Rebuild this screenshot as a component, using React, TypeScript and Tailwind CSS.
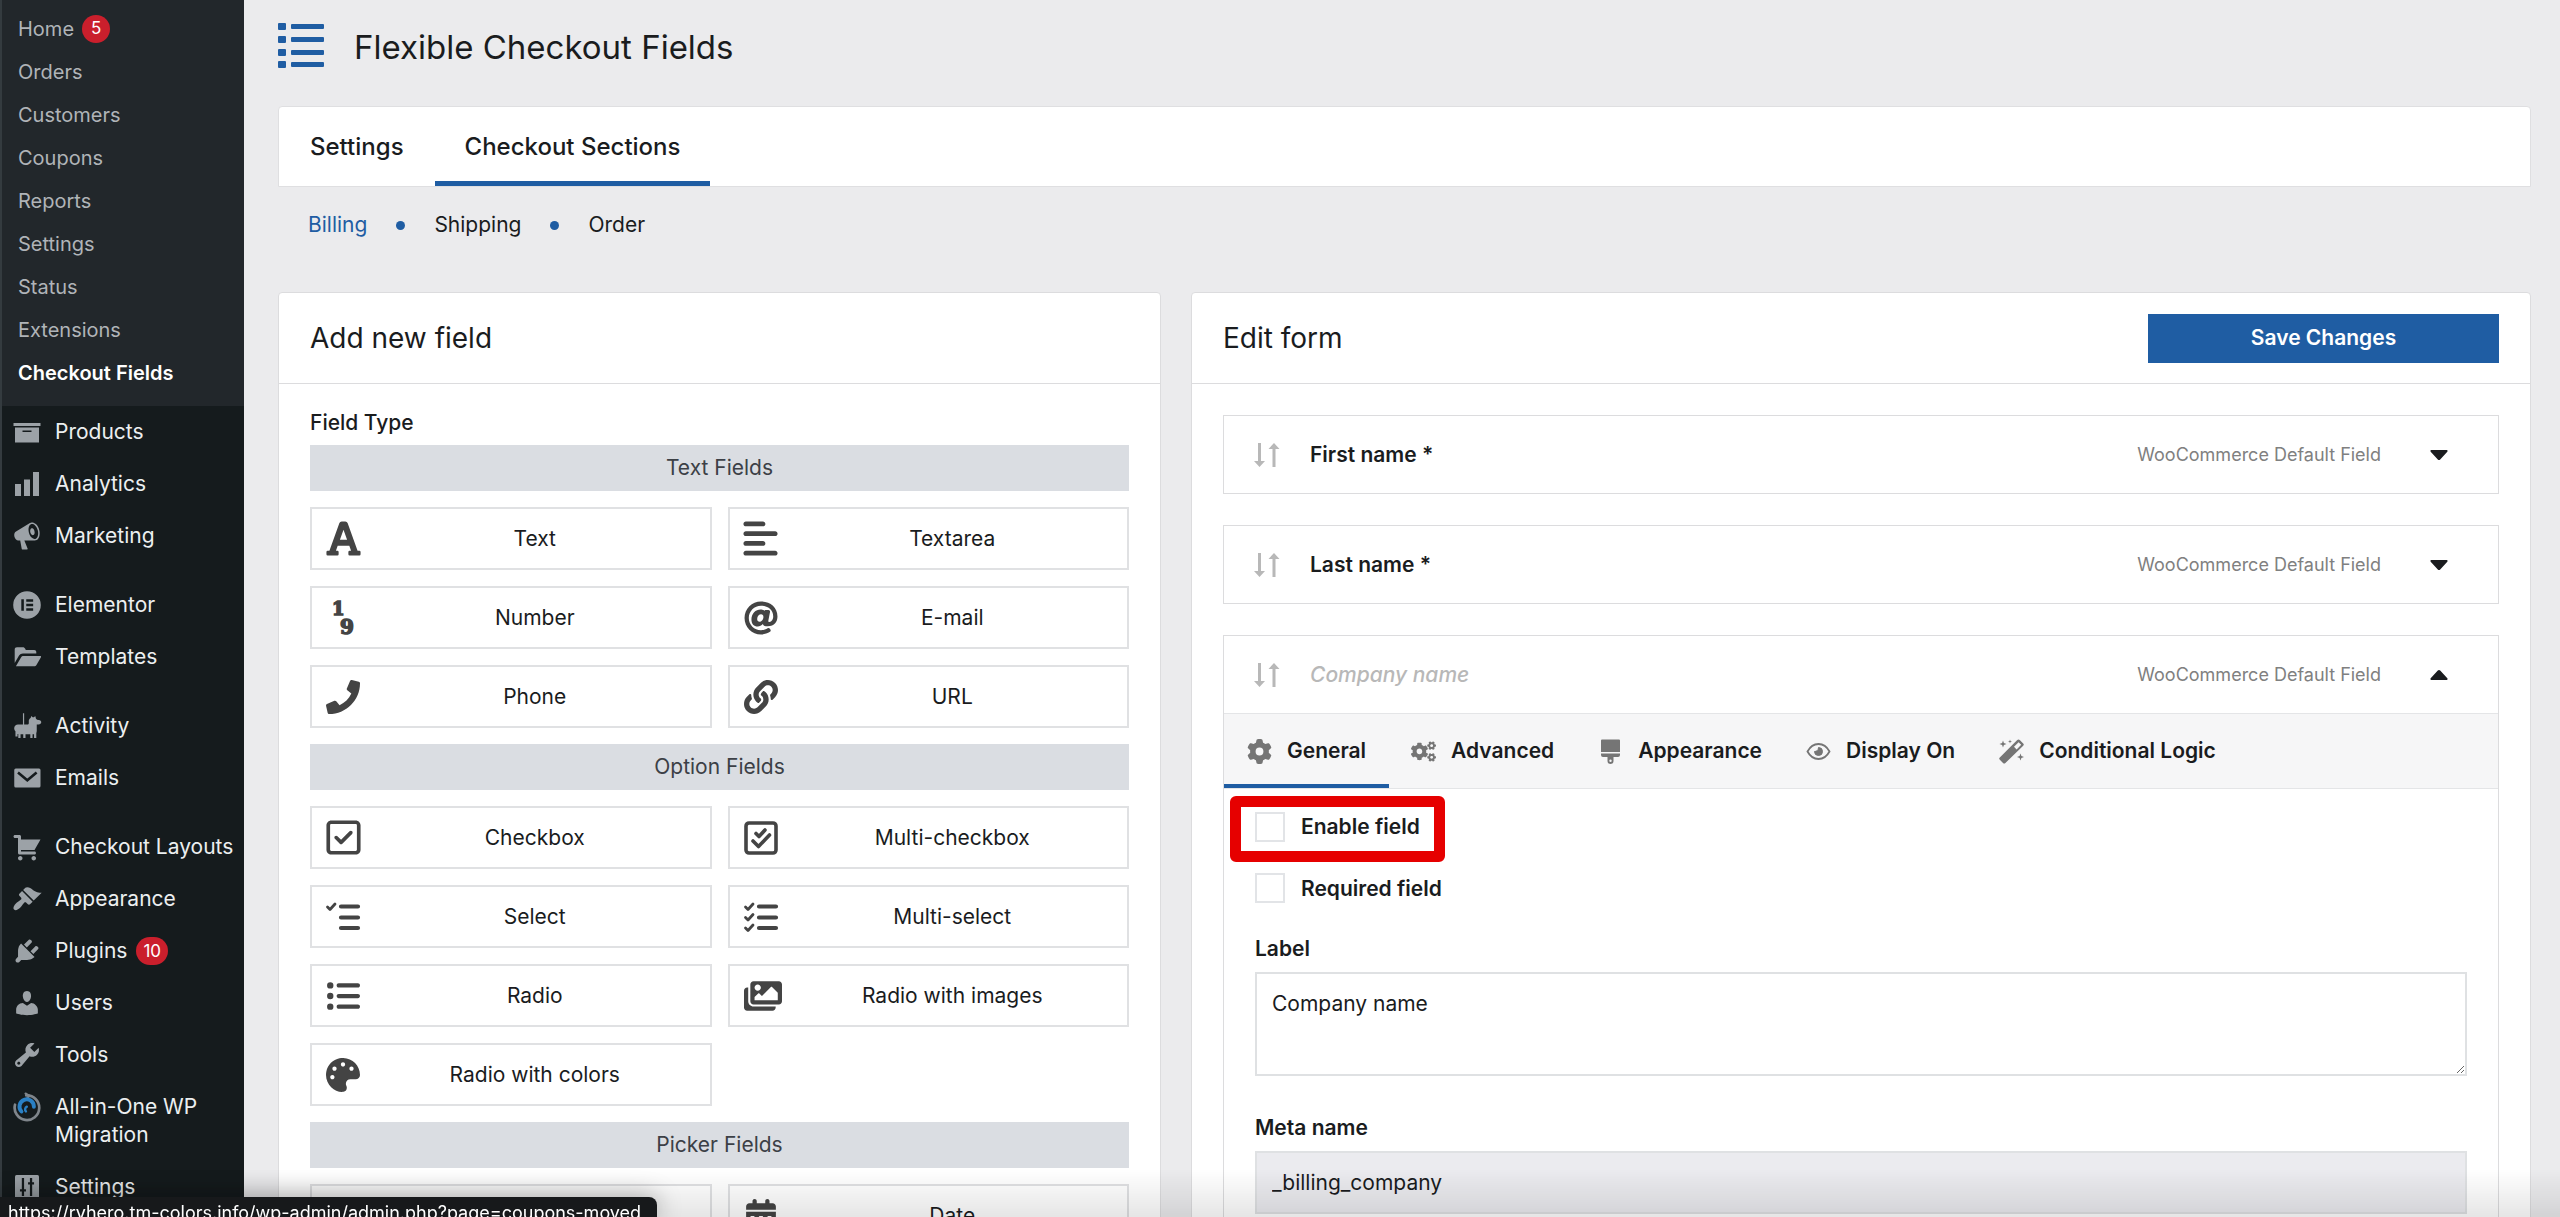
import type { ReactNode } from 'react'
import { FaAt, FaCogs, FaFont, FaImages, FaLink, FaPalette, FaPhone } from 'react-icons/fa'
import { FaAlignLeft, FaCalendarDays, FaGear, FaListUl, FaRegSquareCheck } from 'react-icons/fa6'

const submenu = ['Home', 'Orders', 'Customers', 'Coupons', 'Reports', 'Settings', 'Status', 'Extensions', 'Checkout Fields']

function Dash({ children }: { children: ReactNode }) {
  return (
    <svg viewBox="0 0 20 20" className="-my-px mr-1 size-[30px] shrink-0 text-[#9ca2a7]" fill="currentColor" aria-hidden="true">
      {children}
    </svg>
  )
}

const icons = {
  products: <path d="M19 4v2H1V4h18zM2 7h16v10H2V7zm11 3V9H7v1h6z" />,
  analytics: <path d="M18 18V2h-4v16h4zm-6 0V7H8v11h4zm-6 0v-8H2v8h4z" />,
  marketing: (
    <path d="M18.15 5.94c.46 1.62.38 3.22-.02 4.48-.42 1.28-1.26 2.18-2.3 2.48-.16.06-.26.06-.4.06-.06.02-.12.02-.18.02-.06.02-.14.02-.22.02h-6.8l2.22 5.5c.02.14-.06.26-.14.34-.08.1-.24.16-.34.16H6.95c-.1 0-.26-.06-.34-.16-.08-.08-.16-.2-.14-.34l-1-5.5H4.25l-.02-.02c-.5.06-1.08-.18-1.54-.62s-.88-1.08-1.06-1.88c-.24-.8-.2-1.56-.02-2.2.18-.62.58-1.08 1.06-1.3l.02-.02 9-5.4c.1-.06.18-.1.24-.16.06-.04.14-.08.24-.12.16-.08.28-.12.5-.18 1.04-.3 2.24.1 3.22.98s1.84 2.24 2.26 3.86zm-2.58 5.98h-.02c.4-.1.74-.34 1.04-.7.58-.7.86-1.76.86-3.04 0-.64-.1-1.3-.28-1.98-.34-1.36-1.02-2.5-1.78-3.24s-1.68-1.1-2.46-.88c-.82.22-1.4.96-1.7 2-.32 1.04-.28 2.36.06 3.72.38 1.36 1 2.5 1.8 3.24.78.74 1.62 1.1 2.48.88zm-2.54-7.08c.22-.04.42-.02.62.04.38.16.76.48 1.02 1s.42 1.2.42 1.78c0 .3-.04.56-.12.8-.18.48-.44.84-.86.94-.34.1-.8-.06-1.14-.4s-.64-.86-.78-1.5c-.18-.62-.12-1.24.02-1.72s.48-.84.82-.94z" />
  ),
  elementor: (
    <path fillRule="evenodd" d="M10 .8a9.2 9.2 0 1 0 0 18.4A9.2 9.2 0 0 0 10 .8zM6.2 6.2h1.7v7.6H6.2zM9.5 6.2h4.6v1.6H9.5zM9.5 9.2h4.6v1.6H9.5zM9.5 12.2h4.6v1.6H9.5z" />
  ),
  templates: (
    <path d="M1.8 14V5c0-.9.6-1.5 1.5-1.5h3.9c.8 0 1.3.4 1.6 1l.4.9h5.6c.8 0 1.4.6 1.4 1.4v.8H7.3c-1.1 0-2 .5-2.6 1.4zM2.6 16.2 6 10.3c.4-.7 1-1 1.7-1h11.1c.5 0 .7.4.5.8l-2.9 5.1c-.4.7-1 1-1.7 1z" />
  ),
  activity: (
    <path d="M7.3 1.5h.8V9h2.1c.6 0 1-.3 1-.9V6.5c0-.9.5-1.5 1.2-1.9l.5-1.3.9.9h.8l.9-.9.5 1.8c.4.5 1 .8 1.8.9 1.2.2 1.7.7 1.7 1.5s-.7 1.5-1.8 1.5h-1.2v4.2c0 .6-.1 1-.3 1.4V18h-1.5v-2.5h-1V18h-1.5v-2.5H9V18H7.5v-2.5H5.7V18H4.2v-2.6h-.5V17H2.3v-3.500C1.600 12.800 1.400 12 1.500 11.200 1.600 9.900 2.600 9 4 9h3.300z" />
  ),
  emails: (
    <>
      <rect x="1.5" y="3.7" width="17.5" height="12.6" rx="1" />
      <path d="m4 6.3 6.2 5.2 6.2-5.2" fill="none" stroke="#151b1d" strokeWidth="1.7" />
    </>
  ),
  cart: (
    <path d="M6 13h9c.55 0 1 .45 1 1s-.45 1-1 1H5c-.55 0-1-.45-1-1V4H2c-.55 0-1-.45-1-1s.45-1 1-1h3c.55 0 1 .45 1 1v2h13l-4 7H6v1zm-.5 3c.83 0 1.5.67 1.5 1.5S6.33 19 5.5 19 4 18.33 4 17.5 4.67 16 5.5 16zm9 0c.83 0 1.5.67 1.5 1.5s-.67 1.5-1.5 1.5-1.5-.67-1.5-1.5.67-1.5 1.5-1.5z" />
  ),
  appearance: (
    <path d="M14.48 11.06L7.41 3.99l1.5-1.5c.5-.56 2.3-.47 3.51.32 1.21.8 1.43 1.28 2.91 2.1 1.18.64 2.45 1.26 4.45.85zm-.71.71L6.7 4.7 4.93 6.47c-.39.39-.39 1.02 0 1.41l1.06 1.06c.39.39.39 1.03 0 1.42-.6.6-1.43 1.11-2.21 1.69-.35.26-.7.53-1.01.84C1.43 14.23.4 16.08 1.4 17.07c.99 1 2.84-.03 4.18-1.36.31-.31.58-.66.85-1.02.57-.78 1.08-1.61 1.69-2.21.39-.39 1.02-.39 1.41 0l1.06 1.06c.39.39 1.02.39 1.41 0z" />
  ),
  plugins: (
    <path d="M13.11 4.36L9.87 7.6 8 5.73l3.24-3.24c.35-.34 1.05-.2 1.56.32.52.51.66 1.21.31 1.55zm-8 1.77l.91-1.12 9.01 9.01-1.19.84c-.71.71-2.63 1.16-3.82 1.16H6.14L4.9 17.26c-.59.59-1.54.59-2.12 0-.59-.58-.59-1.53 0-2.12l1.24-1.24v-3.88c0-1.13.4-3.19 1.09-3.89zm7.26 3.97l3.24-3.24c.34-.35 1.04-.21 1.55.31.52.51.66 1.21.31 1.55l-3.24 3.25z" />
  ),
  users: (
    <path d="M10 9.25c-2.27 0-2.73-3.44-2.73-3.44C7 4.02 7.82 2 9.97 2c2.16 0 2.98 2.02 2.71 3.81 0 0-.41 3.44-2.68 3.44zm0 2.57L12.72 10c2.39 0 4.52 2.33 4.52 4.53v2.49s-3.65 1.13-7.24 1.13c-3.65 0-7.24-1.13-7.24-1.13v-2.49c0-2.25 1.94-4.48 4.47-4.48z" />
  ),
  tools: (
    <path d="M16.68 9.77c-1.34 1.34-3.3 1.67-4.95.99l-5.41 6.52c-.99.99-2.59.99-3.58 0s-.99-2.59 0-3.57l6.52-5.42c-.68-1.65-.35-3.61.99-4.95 1.28-1.28 3.12-1.62 4.72-1.06l-2.89 2.89 2.82 2.82 2.86-2.87c.53 1.58.18 3.39-1.08 4.65zM3.81 16.21c.4.39 1.04.39 1.43 0 .4-.4.4-1.04 0-1.43-.39-.4-1.03-.4-1.43 0-.39.39-.39 1.03 0 1.43z" />
  ),
  migration: (
    <g fill="none" strokeLinecap="round">
      <path d="M2 8.5A8.2 8.2 0 1 0 9.500 2.300" stroke="#7f858b" strokeWidth="1.8" />
      <path d="m9 1 2.500 1.500L10 4.500" stroke="#7f858b" strokeWidth="1.4" />
      <path d="M6.300 13a4.800 4.800 0 1 1 8.300-3.200" stroke="#2a80c4" strokeWidth="2.6" />
      <path d="M9.300 13a2 2 0 0 1 .6-3.200" stroke="#2a80c4" strokeWidth="1.6" />
    </g>
  ),
  settings: (
    <>
      <rect x="2" y="2" width="16" height="16" rx="1" />
      <path d="M7.300 4v12M12.700 4v12M5.300 12.300h4M10.700 7.500h4" stroke="#151b1d" strokeWidth="1.5" />
    </>
  ),
}

const menu = [
  [
    { label: 'Products', icon: icons.products },
    { label: 'Analytics', icon: icons.analytics },
    { label: 'Marketing', icon: icons.marketing },
  ],
  [
    { label: 'Elementor', icon: icons.elementor },
    { label: 'Templates', icon: icons.templates },
  ],
  [
    { label: 'Activity', icon: icons.activity },
    { label: 'Emails', icon: icons.emails },
  ],
  [
    { label: 'Checkout Layouts', icon: icons.cart },
    { label: 'Appearance', icon: icons.appearance },
    { label: 'Plugins', icon: icons.plugins, count: 10 },
    { label: 'Users', icon: icons.users },
    { label: 'Tools', icon: icons.tools },
    { label: 'All-in-One WP Migration', icon: icons.migration },
    { label: 'Settings', icon: icons.settings },
  ],
]

function Badge({ children }: { children: ReactNode }) {
  return (
    <span className="flex h-7 min-w-7 items-center justify-center rounded-full bg-[#ca1f2c] px-[7px] text-[17px] text-white">
      {children}
    </span>
  )
}

function Sidebar() {
  return (
    <nav className="w-[244px] shrink-0 border-l-2 border-[#343b3f] bg-[#151b1d]" aria-label="Admin menu">
      <ul className="bg-[#22272b] pt-[7px] pb-3">
        {submenu.map((item) => (
          <li key={item}>
            <a
              href="#"
              className={
                item === 'Checkout Fields'
                  ? 'flex h-[43px] items-center pl-4 text-[20px] font-semibold text-white'
                  : 'flex h-[43px] items-center gap-2 pl-4 text-[20px] text-[#b0b4b8]'
              }
            >
              {item}
              {item === 'Home' && <Badge>5</Badge>}
            </a>
          </li>
        ))}
      </ul>
      {menu.map((group) => (
        <ul key={group[0].label} className="mb-[17px]">
          {group.map((item) => (
            <li key={item.label}>
              <a href="#" className="flex min-h-[52px] gap-[9px] py-3 pr-2 pl-[10px] text-[21px] leading-7 text-[#eceff0]">
                <Dash>{item.icon}</Dash>
                <span className={item.label.startsWith('All') ? 'w-40' : 'whitespace-nowrap'}>{item.label}</span>
                {item.count && <Badge>{item.count}</Badge>}
              </a>
            </li>
          ))}
        </ul>
      ))}
    </nav>
  )
}

function FieldSvg({ children }: { children: ReactNode }) {
  return (
    <svg viewBox="0 0 34 34" className="size-[34px] overflow-visible" fill="currentColor" aria-hidden="true">
      {children}
    </svg>
  )
}

const line = { fill: 'none', stroke: 'currentColor', strokeLinecap: 'round', strokeLinejoin: 'round' } as const

const numberIcon = (
  <FieldSvg>
    <g stroke="currentColor" strokeWidth="1.5" fontWeight="700" fontFamily="DejaVu Serif, serif">
      <text x="6" y="14" fontSize="18">1</text>
      <text x="14" y="33" fontSize="20">9</text>
    </g>
  </FieldSvg>
)

const multiCheckIcon = (
  <FieldSvg>
    <rect x="2" y="2" width="30" height="30" rx="3" {...line} strokeWidth="3.6" />
    <path d="m12 12.500 3 3 6-6.500M9 20l5.500 5.500L25.500 14" {...line} strokeWidth="3.6" />
  </FieldSvg>
)

const selectIcon = (
  <FieldSvg>
    <path d="m1.500 7 2.500 2.500L9 4" {...line} strokeWidth="2.8" />
    <path d="M15 6.500h17M15 17.500h17M15 28h17" {...line} strokeWidth="4.2" />
  </FieldSvg>
)

const multiSelectIcon = (
  <FieldSvg>
    <path d="m1.500 7 2.500 2.500L9 4M1.500 17.500 4 20l5-5.500M1.500 28 4 30.500 9 25" {...line} strokeWidth="2.8" />
    <path d="M15 6.500h17M15 17.500h17M15 28h17" {...line} strokeWidth="4.2" />
  </FieldSvg>
)

const sections = [
  {
    title: 'Text Fields',
    fields: [
      { label: 'Text', icon: <FaFont className="size-[39px] shrink-0" /> },
      { label: 'Textarea', icon: <FaAlignLeft className="size-[39px] shrink-0" /> },
      { label: 'Number', icon: numberIcon },
      { label: 'E-mail', icon: <FaAt /> },
      { label: 'Phone', icon: <FaPhone /> },
      { label: 'URL', icon: <FaLink /> },
    ],
  },
  {
    title: 'Option Fields',
    fields: [
      { label: 'Checkbox', icon: <FaRegSquareCheck className="size-[39px] shrink-0" /> },
      { label: 'Multi-checkbox', icon: multiCheckIcon },
      { label: 'Select', icon: selectIcon },
      { label: 'Multi-select', icon: multiSelectIcon },
      { label: 'Radio', icon: <FaListUl /> },
      { label: 'Radio with images', icon: <FaImages className="ml-1 size-[38px] shrink-0" /> },
      { label: 'Radio with colors', icon: <FaPalette /> },
    ],
  },
  {
    title: 'Picker Fields',
    fields: [
      { label: 'Time', icon: null },
      { label: 'Date', icon: <FaCalendarDays /> },
    ],
  },
]

function AddField() {
  return (
    <section className="w-[883px] shrink-0 rounded-t border border-[#dcdcde] bg-white">
      <h2 className="flex h-[91px] items-center border-b border-[#dcdcde] px-[31px] text-[28px]">Add new field</h2>
      <div className="px-[31px] pt-[25px]">
        <h3 className="text-[21px] leading-7 font-medium">Field Type</h3>
        <div className="mt-2 flex flex-col gap-4">
          {sections.map((section) => (
            <div key={section.title} className="grid grid-cols-2 gap-4">
              <h4 className="col-span-2 flex h-[46px] items-center justify-center bg-[#dadde2] text-[21px] text-[#3c4046]">
                {section.title}
              </h4>
              {section.fields.map((field) => (
                <button key={field.label} type="button" className="flex h-[63px] items-center border-2 border-[#e0e1e3] pl-[14px] text-[21px]">
                  <span className="flex w-[34px] shrink-0 justify-center text-[34px] text-[#444]">{field.icon}</span>
                  <span className="flex-1 text-center">{field.label}</span>
                </button>
              ))}
            </div>
          ))}
        </div>
      </div>
    </section>
  )
}

function RowHead({ label, open }: { label: string; open?: boolean }) {
  return (
    <div className="flex h-[77px] items-center pr-[50px] pl-[30px]">
      <svg viewBox="0 0 26 26" className="size-[26px] text-[#b8b8b8]" fill="currentColor" aria-hidden="true">
        <path d="M4 1h3v18h4l-5.500 6L0 19h4zM18.500 25h3V7h4L20 1l-5.500 6h4z" />
      </svg>
      <h3 className={open ? 'ml-[30px] text-[21px] font-medium text-[#b8b8b8] italic' : 'ml-[30px] text-[21px] font-semibold'}>
        {label}
      </h3>
      <span className="ml-auto text-[18px] text-[#808080]">WooCommerce Default Field</span>
      <button type="button" className="ml-[49px]" aria-label={open ? 'Collapse' : 'Expand'}>
        <svg viewBox="0 0 18 10" className="h-[10px] w-[18px]" fill="currentColor" aria-hidden="true">
          <path d={open ? 'M1.500 10h15c1 0 1.400-1 .8-1.700L10.200.6c-.7-.8-1.700-.8-2.400 0L.7 8.300C.1 9 .5 10 1.500 10z' : 'M1.500 0h15c1 0 1.400 1 .8 1.700l-7.100 7.700c-.7.8-1.700.8-2.400 0L.7 1.700C.1 1 .5 0 1.500 0z'} />
        </svg>
      </button>
    </div>
  )
}

const tabs = [
  { label: 'General', icon: <FaGear /> },
  { label: 'Advanced', icon: <FaCogs /> },
  {
    label: 'Appearance',
    icon: (
      <svg viewBox="0 0 25 25" className="size-[25px]" fill="currentColor" aria-hidden="true">
        <path
          fillRule="evenodd"
          d="M4 .5h17q1 0 1 1V13H3V1.500q0-1 1-1zM3 14.500h19V16q0 2-2 2h-4.500v4q0 3-3 3t-3-3v-4H5q-2 0-2-2zM12.500 20.500a1.200 1.200 0 1 0 0 2.400 1.200 1.200 0 0 0 0-2.400z"
        />
      </svg>
    ),
  },
  {
    label: 'Display On',
    icon: (
      <svg viewBox="0 0 25 25" className="size-[25px]" fill="none" stroke="currentColor" aria-hidden="true">
        <path d="M1.500 12.500Q5.500 5 12.500 5t11 7.500Q19.500 20 12.500 20t-11-7.500z" strokeWidth="1.8" />
        <path d="M12.500 8.500a4 4 0 1 1-4 4c2 0 4-1 4-4z" fill="currentColor" />
      </svg>
    ),
  },
  {
    label: 'Conditional Logic',
    icon: (
      <svg viewBox="0 0 25 25" className="size-[25px]" fill="currentColor" aria-hidden="true">
        <path
          fillRule="evenodd"
          d="M18 1.200 .8 18.400q-1.200 1.200 0 2.400l3.200 3.200q1.200 1.200 2.400 0L24.200 6.800q1.200-1.200 0-2.400L21 1.200q-1.500-1.200-3 0zm1.600 2 2.600 2.600-4.600 4.600L15 7.800z"
        />
        <path d="m4 1.500.9 2.600 2.600.9-2.600.9L4 8.500l-.9-2.600L.5 5l2.600-.9zM11 .5l.5 1.500 1.500.5-1.500.5-.5 1.500-.5-1.500L9 2.500l1.500-.5zM21.500 14.500l.9 2.600 2.600.9-2.600.9-.9 2.600-.9-2.600L18 18l2.600-.9z" />
      </svg>
    ),
  },
]

function EditForm() {
  return (
    <section className="min-w-0 flex-1 rounded-t border border-[#dcdcde] bg-white">
      <div className="flex h-[91px] items-center justify-between border-b border-[#dcdcde] px-[31px]">
        <h2 className="text-[28px]">Edit form</h2>
        <button type="button" className="h-[49px] w-[351px] bg-[#1f5da3] text-[21px] font-semibold text-white">
          Save Changes
        </button>
      </div>
      <div className="flex flex-col gap-[31px] px-[31px] pt-[31px]">
        <div className="border border-[#dcdcde]">
          <RowHead label="First name *" />
        </div>
        <div className="border border-[#dcdcde]">
          <RowHead label="Last name *" />
        </div>
        <div className="border border-[#dcdcde]">
          <RowHead label="Company name" open />
          <div className="flex h-[76px] border-y border-[#e4e5e7] bg-[#f6f6f7]" role="tablist">
            {tabs.map((tab, i) => (
              <button
                key={tab.label}
                type="button"
                role="tab"
                aria-selected={i === 0}
                className={
                  i === 0
                    ? 'flex items-center gap-[15px] border-b-4 border-[#1f5da3] px-[23px] pt-1 text-[21px] font-semibold'
                    : 'flex items-center gap-[15px] px-[22px] text-[21px] font-semibold'
                }
              >
                <span className="text-[25px] text-[#757575]">{tab.icon}</span>
                {tab.label}
              </button>
            ))}
          </div>
          <div className="px-[31px] pt-[22px]">
            <div className="relative">
              <label className="flex items-center gap-4 text-[21px] font-semibold">
                <input type="checkbox" className="size-[30px] appearance-none border-2 border-[#e2e4e7]" />
                Enable field
              </label>
              <div className="pointer-events-none absolute -top-[15px] -left-[25px] h-[66px] w-[215px] rounded-md border-[11px] border-[#e60000]" />
            </div>
            <label className="mt-[30px] flex items-center gap-4 text-[21px] font-semibold">
              <input type="checkbox" className="size-[30px] appearance-none border-2 border-[#e2e4e7]" />
              Required field
            </label>
            <label htmlFor="label" className="mt-[31px] block text-[21px] leading-7 font-semibold">
              Label
            </label>
            <textarea
              id="label"
              defaultValue="Company name"
              className="mt-[9px] block h-[104px] w-full border-2 border-[#dfe1e3] px-[15px] py-4 text-[21px] leading-7"
            />
            <label htmlFor="meta" className="mt-[38px] block text-[21px] leading-7 font-semibold">
              Meta name
            </label>
            <input
              id="meta"
              readOnly
              defaultValue="_billing_company"
              className="mt-[9px] mb-8 block h-[63px] w-full border-2 border-[#dfe1e3] bg-[#ebebef] px-[15px] text-[21px]"
            />
          </div>
        </div>
      </div>
    </section>
  )
}

function App() {
  return (
    <div className="flex h-screen overflow-hidden bg-[#ebebed] font-['Inter','Liberation_Sans',sans-serif] text-[#1a1c1e]">
      <Sidebar />
      <main className="min-w-0 flex-1 pr-[29px] pl-[34px]">
        <header className="flex h-[106px] items-start pt-[23px]">
          <svg viewBox="0 0 46 46" className="size-[46px] text-[#1f5da3]" fill="currentColor" aria-hidden="true">
            <path d="M1 0h6q1 0 1 1v5q0 1-1 1H1Q0 7 0 6V1q0-1 1-1zM1 13h6q1 0 1 1v5q0 1-1 1H1q-1 0-1-1v-5q0-1 1-1zM1 26h6q1 0 1 1v5q0 1-1 1H1q-1 0-1-1v-5q0-1 1-1zM1 38h6q1 0 1 1v5q0 1-1 1H1q-1 0-1-1v-5q0-1 1-1z" />
            <path d="M14 1h31q1 0 1 1v3q0 1-1 1H14q-1 0-1-1V2q0-1 1-1zM14 14h31q1 0 1 1v3q0 1-1 1H14q-1 0-1-1v-3q0-1 1-1zM14 27h31q1 0 1 1v3q0 1-1 1H14q-1 0-1-1v-3q0-1 1-1zM14 39h31q1 0 1 1v3q0 1-1 1H14q-1 0-1-1v-3q0-1 1-1z" />
          </svg>
          <h1 className="ml-[30px] text-[33px] leading-[48px]">Flexible Checkout Fields</h1>
        </header>
        <nav className="flex h-[81px] rounded-t border border-[#dfdfe1] bg-white text-[24px] font-medium" aria-label="Plugin tabs">
          <a href="#" className="flex items-center px-[31px]">
            Settings
          </a>
          <a href="#" className="flex items-center border-b-[5px] border-[#1f5da3] px-[30px] pt-[5px]">
            Checkout Sections
          </a>
        </nav>
        <nav className="flex h-[105px] items-start gap-[29px] px-[30px] pt-6 text-[21px] leading-7" aria-label="Sections">
          <a href="#" className="text-[#1f5da3]">
            Billing
          </a>
          <span className="mt-[10px] size-[9px] rounded-full bg-[#1f5da3]" />
          <a href="#">Shipping</a>
          <span className="mt-[10px] size-[9px] rounded-full bg-[#1f5da3]" />
          <a href="#">Order</a>
        </nav>
        <div className="flex gap-[30px]">
          <AddField />
          <EditForm />
        </div>
      </main>
      {/* link preview that the browser shows at the foot of the window */}
      <div className="pointer-events-none fixed inset-x-0 bottom-0 h-12 bg-linear-to-t from-black/10 to-transparent" />
      <div className="fixed bottom-0 left-0 h-5 overflow-hidden rounded-tr-lg bg-[#17191b] pr-4 pl-2 text-[18px] leading-8 text-white shadow-[0_0_24px_rgba(0,0,0,0.35)]">
        https://ryhero.tm-colors.info/wp-admin/admin.php?page=coupons-moved
      </div>
    </div>
  )
}

export default App
